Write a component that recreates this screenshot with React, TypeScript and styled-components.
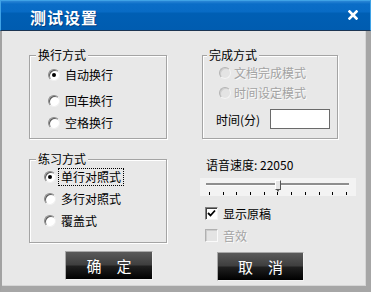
import React from 'react'
import styled, { createGlobalStyle } from 'styled-components'

const GlobalStyle = createGlobalStyle`
  html, body {
    margin: 0;
    padding: 0;
    background: #e8e8e8;
  }
  * {
    box-sizing: border-box;
  }
`

const FONT = `"Noto Sans CJK SC", "Noto Sans", sans-serif`
const BG = '#e8e8e8'

const Window = styled.div`
  width: 371px;
  height: 292px;
  display: flex;
  flex-direction: column;
  background: ${BG};
  font-family: ${FONT};
  font-size: 12px;
  color: #000;
`

const TitleBar = styled.div`
  height: 31px;
  flex: none;
  display: flex;
  align-items: flex-start;
  justify-content: space-between;
  padding: 0 12px 0 29px;
  border: 1px solid #3fa2e6;
  border-bottom: 1px solid #1c3552;
  background: linear-gradient(#2a86d6 0px, #0a6dc7 3px, #086bc5 11px, #005fb4 12px, #005cb0 100%);
`

const TitleText = styled.span`
  margin-top: 7px;
  color: #fff;
  font-weight: bold;
  font-size: 16px;
  line-height: 18px;
  letter-spacing: 1px;
  text-shadow: 1px 1px 0 rgba(0, 30, 80, 0.5);
`

const CloseIcon = styled.svg`
  margin-top: 9px;
`

const Body = styled.div`
  flex: 1;
  display: flex;
  padding-left: 27px;
  border-left: 2px solid #a2a2a2;
  border-right: 5px solid #a6a6a6;
  border-bottom: 6px solid #a6a6a6;
  box-shadow: inset -1px -1px 0 #d6d6d6;
`

const LeftColumn = styled.div`
  width: 138px;
  display: flex;
  flex-direction: column;
  padding-top: 24px;
`

const RightColumn = styled.div`
  width: 156px;
  margin-left: 33px;
  display: flex;
  flex-direction: column;
  padding-top: 24px;
`

const Group = styled.div<{ $width: number; $indent?: number }>`
  width: ${(p) => p.$width}px;
  height: 84px;
  margin-left: ${(p) => p.$indent ?? 0}px;
  border: 1px solid #a4a4a4;
  box-shadow: 1px 1px 0 #fff, inset 1px 1px 0 #fff;
  display: flex;
  flex-direction: column;
`

const Legend = styled.span<{ $indent: number }>`
  display: block;
  width: fit-content;
  margin: -7px 0 0 ${(p) => p.$indent}px;
  padding: 0 2px;
  background: ${BG};
  line-height: 12px;
  height: 12px;
`

const Row = styled.label<{ $top: number; $pad: number; $gap: number; $disabled?: boolean }>`
  display: flex;
  align-items: center;
  height: 14px;
  margin-top: ${(p) => p.$top}px;
  padding-left: ${(p) => p.$pad}px;
  gap: ${(p) => p.$gap}px;
  line-height: 14px;
  color: ${(p) => (p.$disabled ? '#a3a3a3' : '#000')};
  text-shadow: ${(p) => (p.$disabled ? '1px 1px 0 #fbfbfb' : 'none')};
`

const RadioDot = styled.span<{ $checked?: boolean; $disabled?: boolean }>`
  position: relative;
  width: 12px;
  height: 12px;
  flex: none;
  border-radius: 50%;
  background: ${(p) => (p.$disabled ? '#e4e4e4' : '#fff')};
  border: 1px solid;
  border-color: ${(p) => (p.$disabled ? '#b4b4b4 #f4f4f4 #f4f4f4 #b4b4b4' : '#8a8a8a #f0f0f0 #f0f0f0 #8a8a8a')};
  box-shadow: inset 1px 1px 0 ${(p) => (p.$disabled ? '#cfcfcf' : '#5a5a5a')};

  &::after {
    content: '';
    display: ${(p) => (p.$checked ? 'block' : 'none')};
    position: absolute;
    left: 3px;
    top: 3px;
    width: 4px;
    height: 4px;
    border-radius: 50%;
    background: #000;
  }
`

const FocusLabel = styled.span`
  outline: 1px dotted #000;
  outline-offset: 1px;
  padding: 0 1px;
`

const TimeRow = styled.div`
  display: flex;
  align-items: center;
  margin-top: 9px;
  padding-left: 13px;
  height: 20px;
`

const TimeLabel = styled.span`
  width: 54px;
`

const TimeInput = styled.div`
  width: 60px;
  height: 20px;
  background: #fff;
  border: 1px solid #6a6a6a;
`

const SpeedLabel = styled.div`
  margin-top: 19px;
  padding-left: 6px;
  line-height: 14px;
  height: 14px;
`

const SliderBox = styled.div`
  position: relative;
  margin-top: 6px;
  height: 18px;
  background: #f3f3f3;
  padding: 5px 7px 0 6px;
`

const Track = styled.div`
  height: 3px;
  border-top: 2px solid #8e8e8e;
  border-bottom: 1px solid #fcfcfc;
`

const Thumb = styled.div`
  position: absolute;
  top: 2px;
  width: 6px;
  height: 10px;
  background: #e6e6e6;
  border: 1px solid;
  border-color: #fff #555 #555 #fff;

  &::after {
    content: '';
    position: absolute;
    left: 0px;
    bottom: -3px;
    border-left: 2px solid transparent;
    border-right: 2px solid transparent;
    border-top: 3px solid #555;
  }
`

const Ticks = styled.div`
  display: flex;
  justify-content: space-between;
  margin-top: 6px;
  padding: 0 2px 0 3px;
`

const Tick = styled.span`
  width: 1px;
  height: 3px;
  background: #000;
`

const CheckRow = styled.label<{ $top: number; $disabled?: boolean }>`
  display: flex;
  align-items: center;
  gap: 5px;
  height: 13px;
  margin-top: ${(p) => p.$top}px;
  padding-left: 5px;
  line-height: 13px;
  color: ${(p) => (p.$disabled ? '#a3a3a3' : '#000')};
  text-shadow: ${(p) => (p.$disabled ? '1px 1px 0 #fbfbfb' : 'none')};
`

const CheckBox = styled.span<{ $disabled?: boolean }>`
  width: 13px;
  height: 13px;
  flex: none;
  display: flex;
  align-items: center;
  justify-content: center;
  background: ${(p) => (p.$disabled ? '#e4e4e4' : '#fff')};
  border: 1px solid;
  border-color: ${(p) => (p.$disabled ? '#b0b0b0 #fafafa #fafafa #b0b0b0' : '#808080 #f4f4f4 #f4f4f4 #808080')};
  box-shadow: inset 1px 1px 0 ${(p) => (p.$disabled ? '#cdcdcd' : '#404040')};
`

const DarkButton = styled.button<{ $top: number; $left: number; $width: number }>`
  margin-top: ${(p) => p.$top}px;
  margin-left: ${(p) => p.$left}px;
  width: ${(p) => p.$width}px;
  height: 29px;
  padding: 0;
  border: 1px solid #a9a9a9;
  border-right-color: #f2f2f2;
  border-bottom-color: #f2f2f2;
  background: linear-gradient(#5a5a5a 0%, #3e3e3e 48%, #202020 52%, #000 100%);
  color: #fff;
  font-family: ${FONT};
  font-size: 15px;
  line-height: 27px;
  cursor: default;
`

const ticks = Array.from({ length: 11 })
const sliderValue = 0.5

export default function App() {
  return (
    <>
      <GlobalStyle />
      <Window>
        <TitleBar>
          <TitleText>测试设置</TitleText>
          <CloseIcon width="10" height="10" viewBox="0 0 10 10">
            <path d="M1.5 1.5 L8.5 8.5 M8.5 1.5 L1.5 8.5" stroke="#fff" strokeWidth="2.6" strokeLinecap="square" />
          </CloseIcon>
        </TitleBar>
        <Body>
          <LeftColumn>
            <Group $width={138}>
              <Legend $indent={6}>换行方式</Legend>
              <Row $top={7} $pad={18} $gap={5}>
                <RadioDot $checked />
                自动换行
              </Row>
              <Row $top={12} $pad={18} $gap={5}>
                <RadioDot />
                回车换行
              </Row>
              <Row $top={8} $pad={18} $gap={5}>
                <RadioDot />
                空格换行
              </Row>
            </Group>
            <Group $width={138} style={{ marginTop: 20 }}>
              <Legend $indent={6}>练习方式</Legend>
              <Row $top={5} $pad={14} $gap={4}>
                <RadioDot $checked />
                <FocusLabel>单行对照式</FocusLabel>
              </Row>
              <Row $top={8} $pad={14} $gap={5}>
                <RadioDot />
                多行对照式
              </Row>
              <Row $top={8} $pad={14} $gap={5}>
                <RadioDot />
                覆盖式
              </Row>
            </Group>
            <DarkButton $top={8} $left={36} $width={88}>确　定</DarkButton>
          </LeftColumn>
          <RightColumn>
            <Group $width={136} $indent={2}>
              <Legend $indent={4}>完成方式</Legend>
              <Row $top={5} $pad={16} $gap={3} $disabled>
                <RadioDot $disabled />
                文档完成模式
              </Row>
              <Row $top={6} $pad={16} $gap={3} $disabled>
                <RadioDot $disabled />
                时间设定模式
              </Row>
              <TimeRow>
                <TimeLabel>时间(分)</TimeLabel>
                <TimeInput />
              </TimeRow>
            </Group>
            <SpeedLabel>语音速度: 22050</SpeedLabel>
            <SliderBox>
              <Track />
              <Thumb style={{ left: 6 + sliderValue * 143 - 3 }} />
              <Ticks>
                {ticks.map((_, i) => (
                  <Tick key={i} />
                ))}
              </Ticks>
            </SliderBox>
            <CheckRow $top={11}>
              <CheckBox>
                <svg width="9" height="9" viewBox="0 0 9 9">
                  <path d="M1 4 L3.5 6.5 L8 1.5" fill="none" stroke="#000" strokeWidth="1.8" />
                </svg>
              </CheckBox>
              显示原稿
            </CheckRow>
            <CheckRow $top={9} $disabled>
              <CheckBox $disabled />
              音效
            </CheckRow>
            <DarkButton $top={10} $left={17} $width={87}>取　消</DarkButton>
          </RightColumn>
        </Body>
      </Window>
    </>
  )
}
